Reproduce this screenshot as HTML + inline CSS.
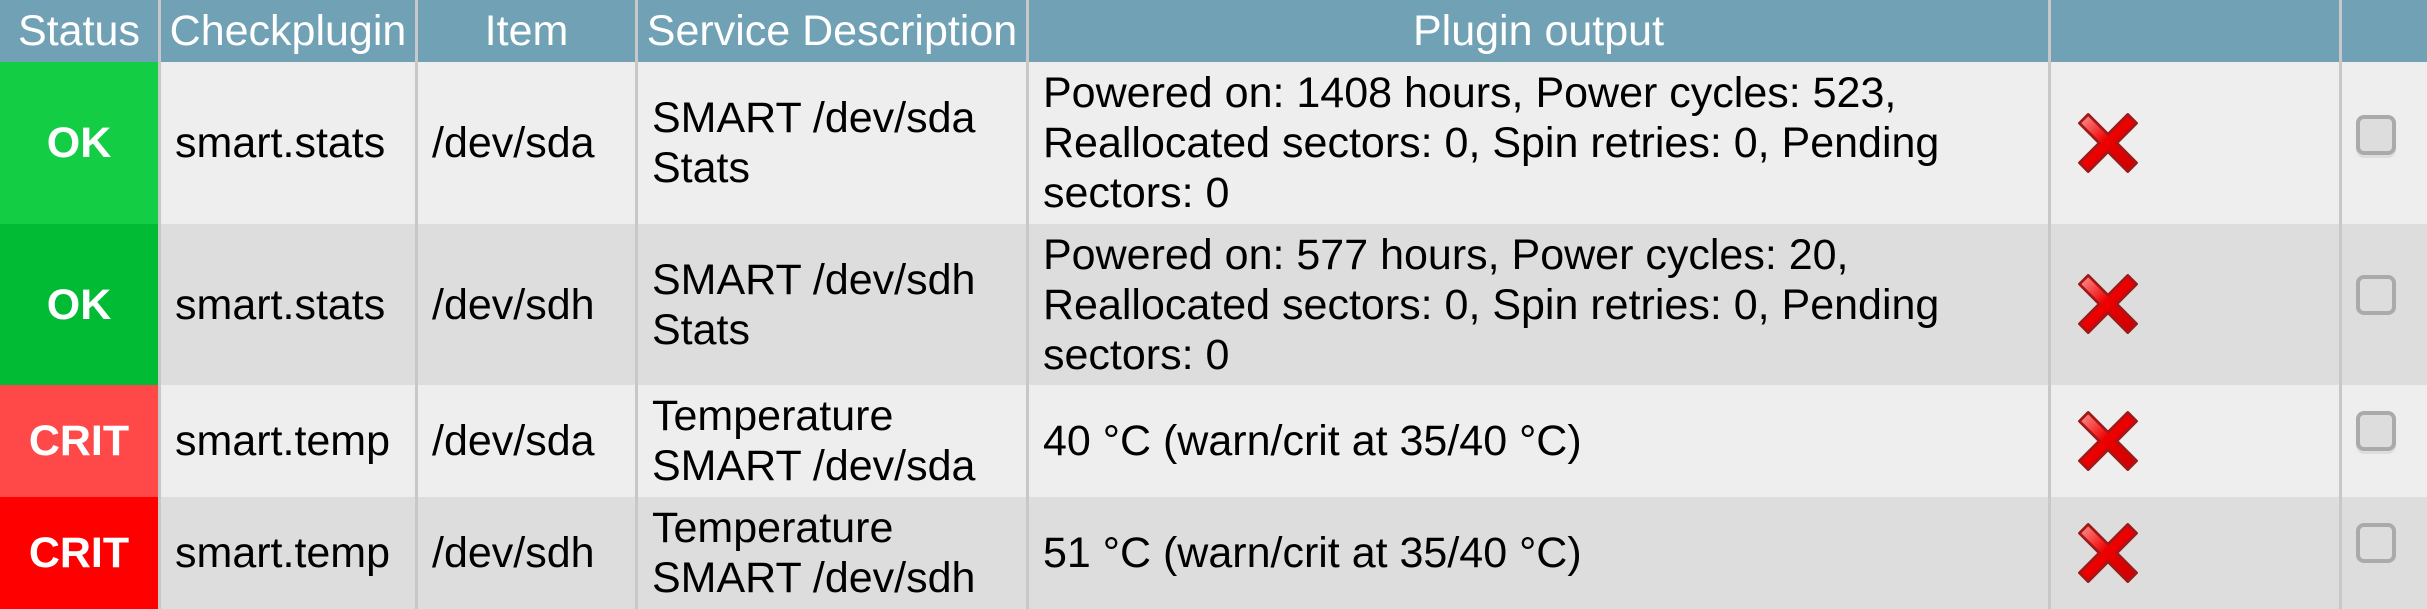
<!DOCTYPE html>
<html><head><meta charset="utf-8"><style>
*{margin:0;padding:0;box-sizing:border-box}
body{width:2427px;height:609px;background:#eee;font-family:"Liberation Sans",sans-serif;font-size:43px;line-height:50px;position:relative;overflow:hidden}
.c{position:absolute;display:flex;align-items:center;padding-left:17px;color:#000;white-space:nowrap}
.h{position:absolute;top:0;height:62px;background:#71a1b5;color:#fff;display:flex;align-items:center;justify-content:center;}
.v{position:absolute;top:0;width:3px;height:609px;background:#c8c8c8}
.st{position:absolute;left:0;width:158px;color:#fff;font-weight:bold;display:flex;align-items:center;justify-content:center}
.x{position:absolute;left:2075px;width:66px;height:66px}
.cb{position:absolute;left:2356px;width:40px;height:40px;border:4px solid #aaa;border-radius:8px;background:#ddd;box-shadow:0 3px 0 #ddd}
</style></head><body>
<div class="h" style="left:0;width:2427px"></div>
<div class="h" style="left:0;width:158px">Status</div>
<div class="h" style="left:161px;width:254px">Checkplugin</div>
<div class="h" style="left:418px;width:217px">Item</div>
<div class="h" style="left:638px;width:388px">Service Description</div>
<div class="h" style="left:1029px;width:1019px">Plugin output</div>

<div style="position:absolute;left:0;top:62px;width:2427px;height:162px;background:#eee"></div>
<div style="position:absolute;left:0;top:224px;width:2427px;height:161px;background:#ddd"></div>
<div style="position:absolute;left:0;top:385px;width:2427px;height:112px;background:#eee"></div>
<div style="position:absolute;left:0;top:497px;width:2427px;height:112px;background:#ddd"></div>

<div class="st" style="top:62px;height:162px;background:#13cd45">OK</div>
<div class="st" style="top:224px;height:161px;background:#00bb33">OK</div>
<div class="st" style="top:385px;height:112px;background:#ff4848">CRIT</div>
<div class="st" style="top:497px;height:112px;background:#ff0000">CRIT</div>

<div class="v" style="left:158px"></div>
<div class="v" style="left:415px"></div>
<div class="v" style="left:635px"></div>
<div class="v" style="left:1026px"></div>
<div class="v" style="left:2048px"></div>
<div class="v" style="left:2339px"></div>

<div class="c" style="left:158px;top:62px;height:162px">smart.stats</div>
<div class="c" style="left:415px;top:62px;height:162px">/dev/sda</div>
<div class="c" style="left:635px;top:62px;height:162px">SMART /dev/sda<br>Stats</div>
<div class="c" style="left:1026px;top:62px;height:162px">Powered on: 1408 hours, Power cycles: 523,<br>Reallocated sectors: 0, Spin retries: 0, Pending<br>sectors: 0</div>

<div class="c" style="left:158px;top:224px;height:161px">smart.stats</div>
<div class="c" style="left:415px;top:224px;height:161px">/dev/sdh</div>
<div class="c" style="left:635px;top:224px;height:161px">SMART /dev/sdh<br>Stats</div>
<div class="c" style="left:1026px;top:224px;height:161px">Powered on: 577 hours, Power cycles: 20,<br>Reallocated sectors: 0, Spin retries: 0, Pending<br>sectors: 0</div>

<div class="c" style="left:158px;top:385px;height:112px">smart.temp</div>
<div class="c" style="left:415px;top:385px;height:112px">/dev/sda</div>
<div class="c" style="left:635px;top:385px;height:112px">Temperature<br>SMART /dev/sda</div>
<div class="c" style="left:1026px;top:385px;height:112px">40 °C (warn/crit at 35/40 °C)</div>

<div class="c" style="left:158px;top:497px;height:112px">smart.temp</div>
<div class="c" style="left:415px;top:497px;height:112px">/dev/sdh</div>
<div class="c" style="left:635px;top:497px;height:112px">Temperature<br>SMART /dev/sdh</div>
<div class="c" style="left:1026px;top:497px;height:112px">51 °C (warn/crit at 35/40 °C)</div>

<svg width="0" height="0" style="position:absolute"><defs>
<linearGradient id="g" x1="0" y1="0" x2="1" y2="1"><stop offset="0" stop-color="#ff9a9a"/><stop offset=".45" stop-color="#e00"/><stop offset="1" stop-color="#c00"/></linearGradient>
<symbol id="xx" viewBox="0 0 60 60"><path d="M12 4 L30 22 L48 4 L56 12 L38 30 L56 48 L48 56 L30 38 L12 56 L4 48 L22 30 L4 12 Z" fill="url(#g)" stroke="#a01818" stroke-width="2.5" stroke-linejoin="round"/></symbol></defs></svg>
<svg class="x" style="top:110px"><use href="#xx"/></svg>
<svg class="x" style="top:271px"><use href="#xx"/></svg>
<svg class="x" style="top:408px"><use href="#xx"/></svg>
<svg class="x" style="top:520px"><use href="#xx"/></svg>

<div class="cb" style="top:115px"></div>
<div class="cb" style="top:275px"></div>
<div class="cb" style="top:411px"></div>
<div class="cb" style="top:523px"></div>
</body></html>
